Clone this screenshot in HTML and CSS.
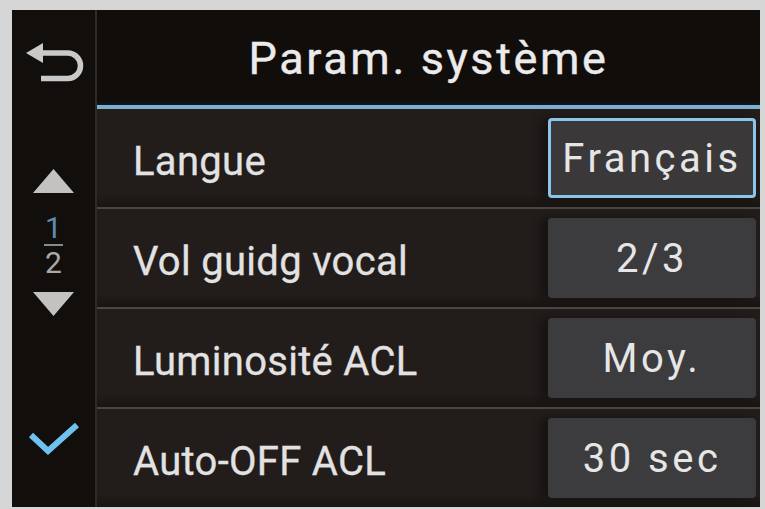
FILE: index.html
```html
<!DOCTYPE html>
<html lang="fr">
<head>
<meta charset="utf-8">
<title>Param. système</title>
<link rel="stylesheet" href="styles.css">
</head>
<body>
<div class="screen">
  <aside class="side">
    <div class="back">
      <svg class="back-icon" width="60" height="44" viewBox="0 0 60 44">
        <polygon points="1,13 18,3 18,23" fill="#c9c9c9"/>
        <path d="M16 13 H42.75 A12.75 12.75 0 0 1 42.75 38.5 H16" fill="none" stroke="#c9c9c9" stroke-width="5.5"/>
      </svg>
    </div>
    <div class="pager">
      <svg class="tri" width="41" height="24" viewBox="0 0 41 24"><polygon points="20.5,0 41,24 0,24" fill="#c3c2c0"/></svg>
      <div class="frac">
        <span class="num">1</span>
        <span class="bar"></span>
        <span class="den">2</span>
      </div>
      <svg class="tri" width="41" height="24" viewBox="0 0 41 24"><polygon points="0,0 41,0 20.5,24" fill="#c3c2c0"/></svg>
    </div>
    <svg class="check" width="52" height="36" viewBox="0 0 52 36">
      <polyline points="3,14 20,30 49,4" fill="none" stroke="#6fc2ef" stroke-width="6"/>
    </svg>
  </aside>
  <main class="main">
    <header class="head"><h1 class="title">Param. système</h1></header>
    <div class="rows">
      <div class="row"><span class="label">Langue</span><span class="val sel">Français</span></div>
      <div class="row"><span class="label">Vol guidg vocal</span><span class="val">2/3</span></div>
      <div class="row"><span class="label">Luminosité ACL</span><span class="val">Moy.</span></div>
      <div class="row"><span class="label">Auto-OFF ACL</span><span class="val">30 sec</span></div>
    </div>
  </main>
</div>
</body>
</html>
```
FILE: styles.css
```css
html, body {
  margin: 0;
  padding: 0;
  background: #d5d5d5;
  width: 765px;
  height: 509px;
  overflow: hidden;
}
.screen {
  margin: 10px 0 0 12px;
  width: 748px;
  height: 497px;
  display: flex;
  background: #120e0c;
  font-family: Roboto, "Liberation Sans", sans-serif;
  color: #e4e4e4;
}
.side {
  width: 83px;
  flex: none;
  background: #120e0c;
  border-right: 2px solid #2e2a28;
  display: flex;
  flex-direction: column;
  align-items: center;
}
.back {
  height: 95px;
  box-sizing: border-box;
  padding-top: 30px;
}
.back-icon { display: block; margin-left: 2px; }
.pager {
  margin-top: 64px;
  display: flex;
  flex-direction: column;
  align-items: center;
}
.tri { display: block; }
.frac {
  display: flex;
  flex-direction: column;
  align-items: center;
  margin: 23px 0 17px;
}
.num, .den {
  font-size: 30px;
  line-height: 24px;
  height: 24px;
}
.num { color: #5d8db4; }
.den { color: #a9a9a9; }
.bar {
  width: 19px;
  height: 2px;
  background: #8a8a8a;
  margin: 4px 0 5px;
}
.check {
  display: block;
  margin-top: 105px;
}
.main {
  flex: 1;
  display: flex;
  flex-direction: column;
  background: #221d1b;
  min-width: 0;
}
.head {
  flex: none;
  box-sizing: border-box;
  background: linear-gradient(to bottom, #110d0b 0, #110d0b 90px, #0c1a26 95px);
  border-bottom: 4px solid #7eb0cd;
  display: flex;
  align-items: center;
  justify-content: center;
  height: 99px;
  padding-top: 2px;
}
.title {
  margin: 0;
  font-weight: 400;
  font-size: 45px;
  letter-spacing: 2.6px;
  color: #ebebeb;
  -webkit-text-stroke: 0.4px #ebebeb;
}
.rows {
  flex: 1;
  display: flex;
  flex-direction: column;
}
.row {
  flex: 1;
  display: flex;
  align-items: center;
  justify-content: space-between;
  padding: 0 4px 0 36px;
  background: linear-gradient(to bottom, #221d1b 0, #221d1b 86%, #181412 100%);
  border-bottom: 2px solid #4a4642;
}
.row:last-child { border-bottom: none; }
.label {
  font-size: 40px;
  letter-spacing: 0.3px;
  color: #e2e2e2;
  padding-top: 6px;
  -webkit-text-stroke: 0.3px #e2e2e2;
}
.val {
  width: 208px;
  height: 80px;
  box-sizing: border-box;
  border-radius: 4px;
  background: #3c3b3d;
  display: flex;
  align-items: center;
  justify-content: center;
  font-size: 40px;
  letter-spacing: 3.5px;
  color: #e6e6e6;
  box-shadow: -8px 0 8px rgba(0,0,0,0.35);
}
.val.sel {
  border: 3px solid #8bc6ea;
  background: #3a3839;
}
```
